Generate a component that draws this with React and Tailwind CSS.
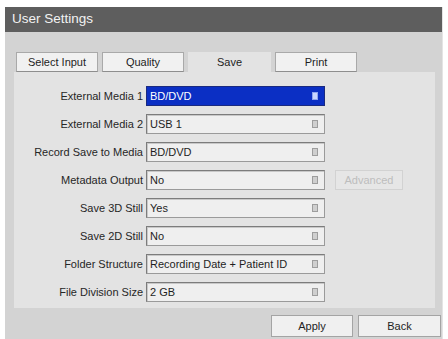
import React from "react";

const rows = [
  { label: "External Media 1", value: "BD/DVD", selected: true },
  { label: "External Media 2", value: "USB 1" },
  { label: "Record Save to Media", value: "BD/DVD" },
  { label: "Metadata Output", value: "No", advanced: true },
  { label: "Save 3D Still", value: "Yes" },
  { label: "Save 2D Still", value: "No" },
  { label: "Folder Structure", value: "Recording Date + Patient ID" },
  { label: "File Division Size", value: "2 GB" },
];

const tabs = [
  { label: "Select Input" },
  { label: "Quality" },
  { label: "Save", active: true },
  { label: "Print" },
];

const Select = ({ value, selected }) => (
  <div
    className={
      selected
        ? "w-[179px] h-[20px] flex items-center justify-between pl-[3px] pr-[6px] bg-[#0b2fc4] border border-[#1a2a80] text-white"
        : "w-[179px] h-[20px] flex items-center justify-between pl-[3px] pr-[6px] bg-[#efefef] border border-[#9a9a9a] border-t-[#7c7c7c] border-l-[#7c7c7c] shadow-[inset_1px_1px_0_#c8c8c8] text-[#1e1e1e]"
    }
  >
    <span>{value}</span>
    <span
      className={
        selected
          ? "w-[6px] h-[8px] bg-[#c9d6ff] border border-[#8ea4ee]"
          : "w-[6px] h-[8px] bg-[#cfcfcf] border border-[#9d9d9d]"
      }
    />
  </div>
);

export default function App() {
  return (
    <div
      className="w-[448px] h-[339px] bg-white pt-[7px] pl-[5px] overflow-hidden"
      style={{ fontFamily: '"Liberation Sans", Arial, sans-serif' }}
    >
      <div className="w-[438px] h-[332px] bg-[#d3d3d3] flex flex-col border-r border-[#e4e4e4]">
        <div className="h-[25px] bg-[#5e5e5e] flex items-center pl-[7px] text-[#f2f2f2] text-[13.5px]">
          User Settings
        </div>
        <div className="pl-[9px] pt-[20px]">
          <div className="flex gap-[4px] pl-[2px] text-[11px] text-[#1e1e1e]">
            {tabs.map((t) =>
              t.active ? (
                <div
                  key={t.label}
                  className="w-[83px] h-[20px] bg-[#e3e3e3] flex items-center justify-center"
                >
                  {t.label}
                </div>
              ) : (
                <div
                  key={t.label}
                  className="w-[82px] h-[20px] bg-[#f1f1f1] border border-[#a9a9a9] border-b-[#8e8e8e] flex items-center justify-center"
                >
                  {t.label}
                </div>
              )
            )}
          </div>
          <div className="w-[421px] h-[236px] bg-[#e3e3e3] pt-[14px] flex flex-col gap-[8px] text-[11px] text-[#1e1e1e]">
            {rows.map((r) => (
              <div key={r.label} className="flex items-center h-[20px]">
                <div className="w-[129px] text-right text-[#262626]">{r.label}</div>
                <div className="ml-[3px]">
                  <Select value={r.value} selected={r.selected} />
                </div>
                {r.advanced && (
                  <div className="ml-[10px] w-[68px] h-[20px] bg-[#e6e6e6] border border-[#d2d2d2] flex items-center justify-center text-[#bdbdbd]">
                    Advanced
                  </div>
                )}
              </div>
            ))}
          </div>
          <div className="flex justify-end gap-[5px] mt-[7px] pr-[1px] text-[11px] text-[#1e1e1e]">
            <div className="w-[82px] h-[22px] bg-[#f0f0f0] border border-[#a4a4a4] flex items-center justify-center">
              Apply
            </div>
            <div className="w-[83px] h-[22px] bg-[#f0f0f0] border border-[#a4a4a4] flex items-center justify-center">
              Back
            </div>
          </div>
        </div>
      </div>
    </div>
  );
}
